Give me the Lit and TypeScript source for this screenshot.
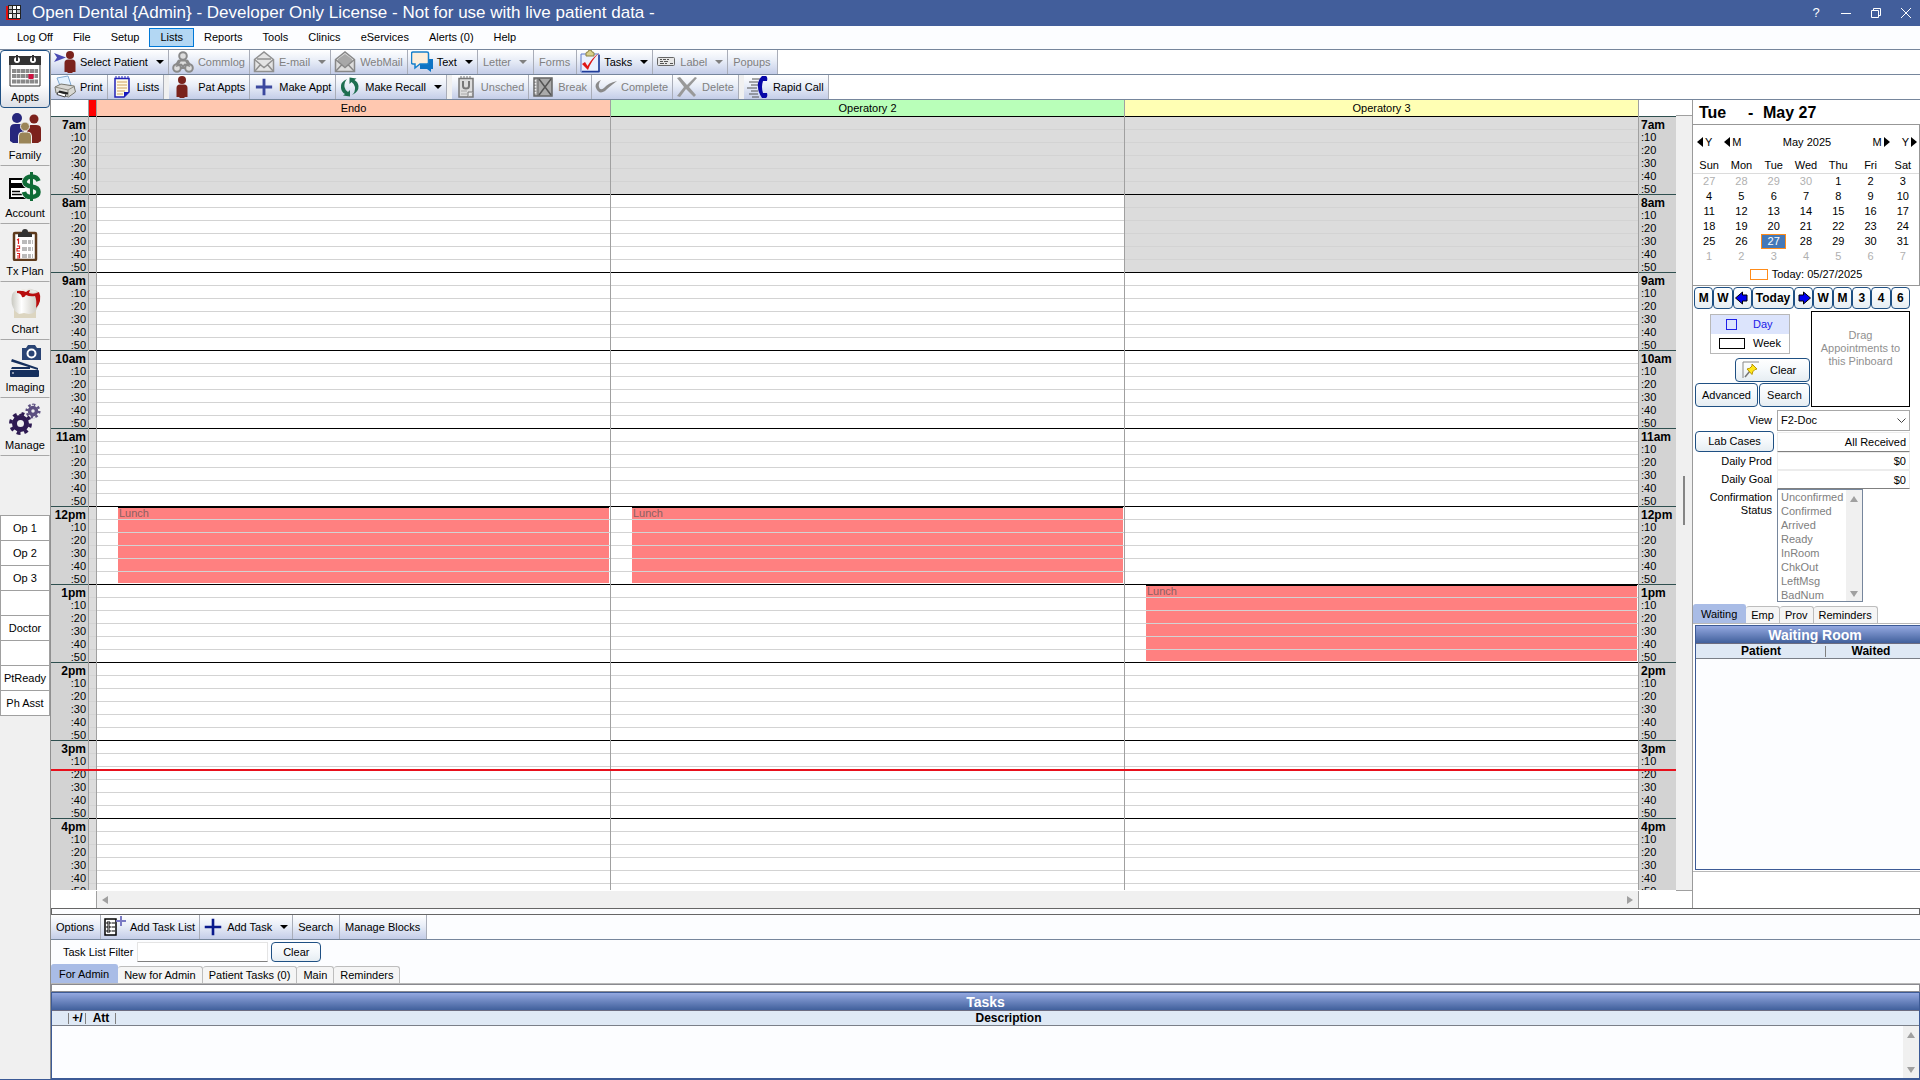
import { LitElement, html, css, svg, nothing } from "lit";
import type { TemplateResult } from "lit";
import { customElement, state } from "lit/decorators.js";
import { classMap } from "lit/directives/class-map.js";

/* ---------- icons ---------- */

const person = (cx: number, color: string) => svg`
  <circle cx=${cx} cy="5" r="4" fill=${color}></circle>
  <path d="M${cx - 5.5} 22V13q0-3.500 3.500-3.500h4q3.500 0 3.500 3.500V22h-2.500l-1 1h-4l-1-1z" fill=${color}></path>`;

const plus = (color: string, a: number, b: number) => svg`
  <path d="M${a} 11.500H${b}M11.500 ${a}V${b}" stroke=${color} stroke-width="3"></path>`;

const icons: Record<string, TemplateResult> = {
  logo: html`<svg class="i16" viewBox="0 0 16 16">
    <path d="M0 1h14v14H0z" fill="#e01010"></path>
    <path d="M2 0h13v14H2z" fill="#222"></path>
    <path d="M3 1h3v3H3zM3 5h3v3H3zM7 9h3v4H7zM11 5h3v3h-3z" fill="#bbb"></path>
    <path d="M7 1h3v3H7zM11 1h3v3h-3zM7 5h3v3H7zM11 9h3v4h-3zM3 9h3v4H3z" fill="#fff"></path></svg>`,
  selectPatient: html`<svg class="i22" viewBox="0 0 22 24">
    <path d="M0 3l12 4.500L0 12l3-4.500z" fill="#4b4bb4"></path>${person(16, "#7a221c")}</svg>`,
  commlog: html`<svg class="i22" viewBox="0 0 22 24">
    <g fill="#ddd" stroke="#8a8a8a" stroke-width="2"><circle cx="11" cy="6" r="3.800"></circle>
    <path d="M7 10l-3 5M15 10l3 5M8 18h6" fill="none"></path>
    <circle cx="5" cy="18" r="3.800"></circle><circle cx="17" cy="18" r="3.800"></circle>
    <path d="M8 10.500h6l2.500 5-3.500-1-2 2-2-2-3.500 1z"></path></g></svg>`,
  email: html`<svg class="i22" viewBox="0 0 22 24">
    <path d="M1.500 9.500L11 2l9.500 7.500V21.500h-19z" fill="#e4e4e4" stroke="#909090" stroke-width="1.500"></path>
    <path d="M1.500 9.500l6 5-6 7M20.500 9.500l-6 5 6 7M7 14.500l4 3 4-3M4 9h14" fill="none" stroke="#909090" stroke-width="1.500"></path></svg>`,
  webmail: html`<svg class="i22" viewBox="0 0 22 24">
    <path d="M1.500 9.500L11 2l9.500 7.500V21.500h-19z" fill="#ddd" stroke="#888" stroke-width="1.500"></path>
    <path d="M4 9l7-5 7 5v3l-7 5-7-5z" fill="#a8a8a8"></path>
    <path d="M1.500 9.500l9.500 8 9.500-8M1.500 21.500l6-6.500M20.500 21.500l-6-6.500" fill="none" stroke="#888" stroke-width="1.500"></path></svg>`,
  text: html`<svg class="i22" viewBox="0 0 22 24">
    <path d="M9 9h13v10h-2v3l-4-3H9z" fill="#0f74c4"></path>
    <path d="M2 2h14q1.500 0 1.500 1.500v9q0 1.500-1.500 1.500H9l-5 4v-4H2q-1.500 0-1.500-1.500v-9Q.5 2 2 2z" fill="#fdeedb" stroke="#1780cc" stroke-width="1.500"></path></svg>`,
  tasks: html`<svg class="i20" viewBox="0 0 20 24">
    <path d="M1 4h18v18H1z" fill="#eaf0ff" stroke="#5a78c8"></path><path d="M2 21.500h17V5" fill="none" stroke="#203c98" stroke-width="1.500"></path>
    <path d="M6 3q0-1 2-1 0-2 2-2t2 2q2 0 2 1v3H6z" fill="#d8cf8a" stroke="#8a8040"></path>
    <path d="M2 14l3-2 2.500 4Q12 8 19 3 11 11 8 20z" fill="#e01818"></path></svg>`,
  label: html`<svg class="i20" viewBox="0 0 20 24">
    <rect x="1.500" y="7.500" width="17" height="8" rx="1" fill="#e6e6e6" stroke="#666"></rect>
    <path d="M4 9.500h2m1 0h3m1 0h2M4 11.500h3m1 0h4M4 13.500h4m1 0h2m3 0h3" stroke="#555"></path></svg>`,
  print: html`<svg class="i22" viewBox="0 0 22 24">
    <path d="M3 3l11-2 3 9-10 3z" fill="#e4f2ff" stroke="#7fa8d0"></path>
    <path d="M1 12l6-3 13 2 1.500 6-7 5L2 18z" fill="#d8d8d4" stroke="#77776f"></path>
    <path d="M1 12l13 3 7-4M14 15v6" stroke="#8c8c84" fill="none"></path>
    <path d="M4 17l8 2-1 3-8-2.500z" fill="#fff" stroke="#444"></path><path d="M5 16.500l9 2" stroke="#222" stroke-width="2"></path></svg>`,
  lists: html`<svg class="i16w" viewBox="0 0 16 24">
    <path d="M1 3.500h14V17l-5 5H1z" fill="#fffbe8" stroke="#2222b8" stroke-width="1.500"></path>
    <path d="M2 3V1m3 2V1m3 2V1m3 2V1m3 2V1" stroke="#2222b8"></path>
    <path d="M3 7h10M3 10h10M3 13h10M3 16h8M3 19h6" stroke="#dfc08a" stroke-width="1.500"></path>
    <path d="M10 22v-5h5z" fill="#1818c0"></path></svg>`,
  patAppts: html`<svg class="i22" viewBox="0 0 22 24">${person(10, "#7a221c")}</svg>`,
  plus: html`<svg class="i22" viewBox="0 0 23 23">${plus("#3b489e", 3, 20)}</svg>`,
  plusDark: html`<svg class="i20" viewBox="0 0 23 23">${plus("#0a1a8c", 2, 21)}</svg>`,
  recall: html`<svg class="i22" viewBox="0 0 22 24">
    <path d="M8 4Q1 7 2 13q.5 4 4 6l-2 1.500 7 1V15l-2 2q-3-2-3.500-5Q5 7 8 4z" fill="#1e6e50"></path>
    <path d="M13 20q7-3 6.500-9-.5-4-4-6l2-1.500-7-1V9l2-2q3 2 3.500 5 .5 5-3 8z" fill="#1e6e50"></path></svg>`,
  unsched: html`<svg class="i16w" viewBox="0 0 16 24">
    <path d="M1 3.500h14V22H1z" fill="#ddd" stroke="#777" stroke-width="1.500"></path><path d="M3 3V1m3 2V1m3 2V1m3 2V1" stroke="#777"></path>
    <path d="M5 6v5q0 2.500 3 2.500T11 11V6" fill="none" stroke="#777" stroke-width="2"></path><path d="M3 16h6M3 19h6" stroke="#aaa"></path>
    <path d="M10 22v-5h5" fill="#eee" stroke="#777"></path></svg>`,
  break: html`<svg class="i22" viewBox="0 0 22 24">
    <path d="M2 3h18v18H2z" fill="#aaa" stroke="#666" stroke-width="1.500"></path><path d="M6 3v18" stroke="#666"></path>
    <path d="M3.500 5v15" stroke="#eee" stroke-width="1.500" stroke-dasharray="1.500 1.500"></path>
    <path d="M7 4l12 16M19 4L7 20" stroke="#555" stroke-width="1.500"></path></svg>`,
  complete: html`<svg class="i22" viewBox="0 0 22 24">
    <path d="M6 5Q-1 8 1 13q3 7 9 3 4-4 12-10-9 2-13 7-4 3-5-1Q3 8 6 5z" fill="#8a8a8a"></path></svg>`,
  delete: html`<svg class="i22" viewBox="0 0 22 24">
    <path d="M1 3l3-1 7 8 8-8 2 1-8 9 7 8-2 2-8-8-6 8-3-1 7-9z" fill="#999"></path></svg>`,
  rapid: html`<svg class="i22" viewBox="0 0 22 24">
    <path d="M5 4h8M2 7h9M4 10h7M0 13h10M4 16h7M2 19h9M5 22h7" stroke="#555"></path>
    <path d="M19 1h-4q-5 5-4 11 0 5 4 11h4q2-1 1-5h-4q-2-6 0-12h4q1-4-1-5z" fill="#0808a8"></path></svg>`,
  addList: html`<svg class="i22" viewBox="0 0 22 24">
    <path d="M1 4h11v16H1z" fill="#fff" stroke="#000" stroke-width="1.500"></path>
    <path d="M3 7h3v2H3zM3 11h3v2H3zM3 15h3v2H3z" stroke="#000" fill="none"></path><path d="M7.500 8H11M7.500 12H11M7.500 16H11" stroke="#000"></path>
    <path d="M12 6h10M17 1v10" stroke="#7a7ac4" stroke-width="2"></path></svg>`,
  pin: html`<svg class="i18" viewBox="0 0 18 18">
    <path d="M1 17V1h16" fill="none" stroke="#888"></path><path d="M3 16l5-6" stroke="#777" stroke-width="1.500"></path>
    <path d="M5 8q3 0 5-3V3l5 5-2 .5q-3 2-3 5z" fill="#ffe61a" stroke="#b89400"></path></svg>`,
  arrowLeft: html`<svg class="i14" viewBox="0 0 14 14"><path d="M0.500 7l7-6v3h4.500v6H7.500v3z" fill="#0000f0" stroke="#000"></path></svg>`,
  arrowRight: html`<svg class="i14" viewBox="0 0 14 14"><path d="M13.500 7l-7-6v3H2v6h4.500v3z" fill="#0000f0" stroke="#000"></path></svg>`,
  appts: html`<svg class="i32" viewBox="0 0 32 32">
    <path d="M1 2h30v29H1z" fill="#fff" stroke="#333"></path><path d="M0 1h32v9H0z" fill="#333"></path>
    <circle cx="8" cy="5" r="3" fill="#fff"></circle><circle cx="24" cy="5" r="3" fill="#fff"></circle>
    <path d="M8 0v6M24 0v6" stroke="#333" stroke-width="2"></path>
    <path d="M3 16h26M3 21h26M3 26.500h26" stroke="#8a8a8a" stroke-width="4" stroke-dasharray="4 .500"></path>
    <rect x="19.500" y="19" width="5" height="5" fill="#d01040"></rect></svg>`,
  family: html`<svg class="i32" viewBox="0 0 32 32">
    <circle cx="8" cy="5" r="5" fill="#26267c"></circle><path d="M1 28V16q0-5 5-5h4q5 0 5 5v12l-3 2H4z" fill="#26267c"></path>
    <circle cx="25" cy="6" r="4.500" fill="#7c221c"></circle><path d="M18 28V16q0-4 4-4h5q5 0 5 4v12l-3 2h-8z" fill="#7c221c"></path>
    <circle cx="16" cy="13.500" r="4.500" fill="#9a8558" stroke="#f0f0f0"></circle><path d="M9.500 31v-8q0-4 4-4h5q4 0 4 4v8z" fill="#9a8558" stroke="#f0f0f0"></path></svg>`,
  account: html`<svg class="i32" viewBox="0 0 32 32">
    <path d="M1 8h20v19H1z" fill="#fff" stroke="#000" stroke-width="2"></path><path d="M1 12h18v5H1z"></path>
    <path d="M3 20.500h8M3 23.500h10" stroke="#000" stroke-width="1.500"></path>
    <path d="M29.500 10Q28 5.500 22.500 5.500T15.500 10.500q0 4 7 5t7 5.500-7 5q-6.500 0-7.500-5M22.500 1v29" fill="none" stroke="#f0f0f0" stroke-width="6"></path>
    <path d="M29.500 10Q28 5.500 22.500 5.500T15.500 10.500q0 4 7 5t7 5.500-7 5q-6.500 0-7.500-5" fill="none" stroke="#0f6b36" stroke-width="4.500"></path>
    <path d="M22.500 1v29" stroke="#0f6b36" stroke-width="3"></path></svg>`,
  txplan: html`<svg class="i32" viewBox="0 0 32 32">
    <rect x="5" y="4" width="22" height="27" rx="1" fill="#fff" stroke="#5e3a1c" stroke-width="2.500"></rect>
    <path d="M9 8V5l4-2q0-3 3-3t3 3l4 2v3z" fill="#333"></path>
    <path d="M13 12h11M13 14h11M13 19h11M13 21h11M13 26h11M13 28h11" stroke="#777" stroke-dasharray="5 1 3 1"></path>
    <path d="M8 11l1.500-1v5M8 17h2.500v2.500H8V22h3M8 24.500h2.500V29H8m0-2h2.500" fill="none" stroke="#e02020" stroke-width="1.200"></path></svg>`,
  chart: html`<svg class="i32" viewBox="0 0 32 32">
    <defs><linearGradient id="tooth"><stop offset="0" stop-color="#c8c8c0"></stop><stop offset=".35" stop-color="#fff"></stop><stop offset="1" stop-color="#c4c2b8"></stop></linearGradient></defs>
    <path d="M5 22h22v9H5z" fill="#dcd5c0"></path>
    <path d="M3 8q1-4 6-5 3-2 7 0 4-3 9 0 6 1 6 7-1 9-5 15-3 2-6 2l-5-1-5 1-4-3Q1 17 3 8z" fill="url(#tooth)"></path>
    <path d="M8 4q5-1 9 1 2-2 4-2l-1 3q5 2 10-1 2 4 1 9-1 4-4 7 1-8-1-12-5 1-9-1-2 3-4 2-1-4-5-4z" fill="#b80d0d"></path>
    <path d="M11 3q3-2 6 0-3 2-6 0zM21 4q4-2 7 1-4 2-7-1z" fill="#eceae4"></path></svg>`,
  imaging: html`<svg class="i32" viewBox="0 0 32 32">
    <path d="M13 3h4l2-3h7l2 3h4v12H13z" fill="#2a4474"></path><circle cx="22.500" cy="8.500" r="4" fill="none" stroke="#fff" stroke-width="2"></circle>
    <path d="M3 14l26 9v2L2 16.500zM3 22h18v2H2z" fill="#16305e"></path><rect x="1" y="25" width="29" height="7" rx="1" fill="#16305e"></rect>
    <path d="M3 28h2" stroke="#fff"></path></svg>`,
  manage: html`<svg class="i32" viewBox="0 0 32 32">
    <circle cx="11.500" cy="20.500" r="6" fill="none" stroke="#2e1a52" stroke-width="5"></circle>
    <circle cx="11.500" cy="20.500" r="9.700" fill="none" stroke="#2e1a52" stroke-width="3.500" pathLength="16" stroke-dasharray="1 1"></circle>
    <circle cx="24" cy="8" r="3.500" fill="none" stroke="#5c4f80" stroke-width="3.500"></circle>
    <circle cx="24" cy="8" r="6.300" fill="none" stroke="#5c4f80" stroke-width="2.500" pathLength="16" stroke-dasharray="1 1"></circle></svg>`,
};

/* ---------- data ---------- */

interface ToolItem { label: string; icon?: string; menu?: boolean; off?: boolean; gap?: boolean; }

const MENU = ["Log Off", "File", "Setup", "Lists", "Reports", "Tools", "Clinics", "eServices", "Alerts (0)", "Help"];

const MAIN_TOOLS: ToolItem[] = [
  { label: "Select Patient", icon: "selectPatient", menu: true },
  { label: "Commlog", icon: "commlog", off: true },
  { label: "E-mail", icon: "email", menu: true, off: true },
  { label: "WebMail", icon: "webmail", off: true },
  { label: "Text", icon: "text", menu: true },
  { label: "Letter", menu: true, off: true },
  { label: "Forms", off: true },
  { label: "Tasks", icon: "tasks", menu: true },
  { label: "Label", icon: "label", menu: true, off: true },
  { label: "Popups", off: true },
];

const APPT_TOOLS: ToolItem[] = [
  { label: "Print", icon: "print" },
  { label: "Lists", icon: "lists" },
  { label: "Pat Appts", icon: "patAppts", gap: true },
  { label: "Make Appt", icon: "plus" },
  { label: "Make Recall", icon: "recall", menu: true },
  { label: "Unsched", icon: "unsched", off: true, gap: true },
  { label: "Break", icon: "break", off: true },
  { label: "Complete", icon: "complete", off: true },
  { label: "Delete", icon: "delete", off: true },
  { label: "Rapid Call", icon: "rapid", gap: true },
];

const TASK_TOOLS: ToolItem[] = [
  { label: "Options" },
  { label: "Add Task List", icon: "addList" },
  { label: "Add Task", icon: "plusDark", menu: true },
  { label: "Search" },
  { label: "Manage Blocks" },
];

const MODULES = [
  ["Appts", "appts"], ["Family", "family"], ["Account", "account"], ["Tx Plan", "txplan"],
  ["Chart", "chart"], ["Imaging", "imaging"], ["Manage", "manage"],
];
const ROOMS = ["Op 1", "Op 2", "Op 3", "", "Doctor", "", "PtReady", "Ph Asst"];

const HOURS = ["7am", "8am", "9am", "10am", "11am", "12pm", "1pm", "2pm", "3pm", "4pm"];
const MINUTES = [":10", ":20", ":30", ":40", ":50"];
const OPERATORIES = [
  { name: "Endo", tone: "peach", closed: ["7am"], lunch: "12pm" },
  { name: "Operatory 2", tone: "green", closed: ["7am"], lunch: "12pm" },
  { name: "Operatory 3", tone: "yellow", closed: ["7am", "8am"], lunch: "1pm" },
];

const WEEKDAYS = ["Sun", "Mon", "Tue", "Wed", "Thu", "Fri", "Sat"];
// Six weeks starting Sunday, April 27
const WEEKS = Array.from({ length: 6 }, (_, w) =>
  Array.from({ length: 7 }, (_, d) => {
    const n = w * 7 + d - 3;
    if (n < 1) return { day: 30 + n, other: true };
    return n > 31 ? { day: n - 31, other: true } : { day: n, other: false };
  }));

const STATUSES = ["Unconfirmed", "Confirmed", "Arrived", "Ready", "InRoom", "ChkOut", "LeftMsg", "BadNum"];

/* ---------- shared styles ---------- */

const base = css`
  :host { display: block; box-sizing: border-box; }
  *, *::before, *::after { box-sizing: border-box; }
  button, input, select { font: inherit; color: inherit; margin: 0; padding: 0; border: 0; background: none; border-radius: 0; outline: 0; }
  button { cursor: default; white-space: nowrap; }
  svg { display: block; flex: none; }
  .i14 { width: 14px; height: 14px; }
  .i16 { width: 16px; height: 16px; }
  .i18 { width: 18px; height: 18px; }
  .i16w { width: 16px; height: 24px; margin: 0 3px; }
  .i20 { width: 20px; height: 24px; }
  .i22 { width: 22px; height: 24px; }
  .i32 { width: 32px; height: 32px; }
  .push { border: 1px solid #1f5083; border-radius: 4px; background: linear-gradient(#fff, #f4f8fb 50%, #e6edf2); text-align: center; }
  .tabs { display: flex; align-items: flex-end; height: 20px; border-bottom: 1px solid #b8b8b8; }
  .tab { height: 17px; padding: 0 6px; border: 1px solid #bdbdbd; border-left-width: 0; border-bottom: 0; border-radius: 3px 3px 0 0; background: #f5f5f5; }
  .tab.on { height: 19px; padding: 0 8px; background: #a9bce6; border-color: #a9bce6; }
  .up, .down, .left, .right, .caret { width: 0; height: 0; border: 4px solid transparent; flex: none; }
  .up { border-top: 0; border-bottom: 6px solid #a0a0a0; }
  .down { border-bottom: 0; border-top: 6px solid #a0a0a0; }
  .left { border-left: 0; border-right: 6px solid #a0a0a0; }
  .right { border-right: 0; border-left: 6px solid #a0a0a0; }
  .caret { border-bottom: 0; border-top: 4px solid currentColor; margin-left: 4px; }
  .band { height: 18px; text-align: center; color: #fff; font: bold 14px/18px "Liberation Sans", sans-serif; background: linear-gradient(#94a8e0, #41609c); border-bottom: 1px solid #6c6c80; }
  .cols { width: 100%; border-collapse: collapse; table-layout: fixed; background: #dfe9f5; border-bottom: 1px solid #7a7f88; }
  .cols th { height: 14px; padding: 0; font: bold 12px/14px "Liberation Sans", sans-serif; }
  .cols th.sep { background: linear-gradient(#808080, #808080) right center / 1px 11px no-repeat; }
`;

/* ---------- toolbar ---------- */

@customElement("tool-strip")
class ToolStrip extends LitElement {
  static properties = { items: { attribute: false } };
  declare items: ToolItem[];
  static styles = [base, css`
    .strip { display: flex; height: 25px; border-bottom: 1px solid #76869c; }
    .tool { display: flex; align-items: center; gap: 4px; height: 24px; padding: 0 4px 0 3px; border-right: 1px solid #a9adb8; background: linear-gradient(#fff, #e8edf7 45%, #c4cde8); }
    .plain { padding: 0 6px 0 5px; }
    .gap { border-left: 5px solid #f0f0f0; }
    .off { color: #808080; }
  `];
  render() {
    return html`<div class="strip" role="toolbar">${this.items.map((t) => html`
      <button class=${classMap({ tool: true, plain: !t.icon, off: !!t.off, gap: !!t.gap })} ?disabled=${t.off}>
        ${t.icon ? icons[t.icon] : nothing}<span>${t.label}</span>
        ${t.menu ? html`<span class="caret"></span>` : nothing}
      </button>`)}</div>`;
  }
}

/* ---------- schedule ---------- */

@customElement("appt-schedule")
class ApptSchedule extends LitElement {
  static styles = [base, css`
    :host { display: flex; flex: 1; min-width: 0; min-height: 0; }
    .left-part { display: flex; flex-direction: column; flex: 1; min-width: 0; }
    .grid { position: relative; display: grid; flex: 1; min-height: 0; overflow: hidden; grid-template: 16px auto / 37px 9px repeat(3, 1fr) 37px; }
    .head { text-align: center; line-height: 16px; border-right: 1px solid #a0a0a0; }
    .peach { background: #ffc8b0; }
    .green { background: #b9ffb9; }
    .yellow { background: #ffffb4; }
    .flag { background: #f00; border: solid #a0a0a0; border-width: 0 1px; }
    .times { background: #d3d3d3; }
    .times.l { text-align: right; }
    .block { height: 78px; padding: 1px 2px 0; border-top: 1px solid #2f4f4f; }
    .slot { height: 13px; line-height: 13px; }
    .slot.h { padding-top: 1px; font: bold 12px/13px "Liberation Sans", sans-serif; }
    .strip { background: #dcdcdc; border: solid #a0a0a0; border-width: 0 1px; }
    .op { border-right: 1px solid #a0a0a0; }
    .hour { height: 78px; border-top: 1px solid #000; }
    .lines { background-image: repeating-linear-gradient(transparent 0 12px, #d3d3d3 12px 13px); }
    .closed { background-color: #dcdcdc; }
    .event { height: 76px; margin: 0 1px 0 21px; background-color: #ff8080; color: #8a6060; box-shadow: inset 0 1px #000; padding: 0 1px; line-height: 13px; }
    .now { position: absolute; left: 0; right: 0; top: 669px; height: 2px; background: #e8101c; }
    .hbar { display: flex; justify-content: space-between; align-items: center; height: 17px; margin: 1px 37px 0 45px; padding: 0 5px; background: #f0f0f0; border: solid #a0a0a0; border-width: 0 1px; }
    .vbar { width: 16px; margin: 15px 0 17px; background: #f0f0f0; border: solid #a0a0a0; border-width: 1px 0; display: flex; justify-content: center; }
    .thumb { width: 2px; height: 49px; margin-top: 360px; background: #858585; }
  `];
  private times(side: string) {
    return html`<div class="times ${side}">${HOURS.map((h) => html`<div class="block">
      <div class="slot h">${h}</div>${MINUTES.map((m) => html`<div class="slot">${m}</div>`)}</div>`)}</div>`;
  }
  render() {
    return html`
      <div class="left-part">
        <div class="grid">
          <div></div><div class="flag"></div>
          ${OPERATORIES.map((o) => html`<div class="head ${o.tone}">${o.name}</div>`)}
          <div></div>
          ${this.times("l")}
          <div class="strip">${HOURS.map(() => html`<div class="hour lines"></div>`)}</div>
          ${OPERATORIES.map((o) => html`<div class="op">${HOURS.map((h) => html`
            <div class=${classMap({ hour: true, lines: true, closed: o.closed.includes(h) })}>
              ${o.lunch === h ? html`<div class="event lines">Lunch</div>` : nothing}
            </div>`)}</div>`)}
          ${this.times("r")}
          <div class="now"></div>
        </div>
        <div class="hbar"><span class="left"></span><span class="right"></span></div>
      </div>
      <div class="vbar"><span class="thumb"></span></div>`;
  }
}

/* ---------- side panel ---------- */

@customElement("side-panel")
class SidePanel extends LitElement {
  @state() private tab = "Waiting";
  static styles = [base, css`
    :host { width: 228px; flex: none; border-left: 1px solid #9a9a9a; background: #fff; }
    .date { display: flex; height: 24px; padding: 3px 6px 0 6px; font: bold 16px/20px "Liberation Sans", sans-serif; }
    .date .wd { width: 49px; }
    .date .dash { width: 15px; }
    .cal { height: 162px; border: 1px solid #979797; border-left: 0; }
    .nav { display: flex; justify-content: space-between; align-items: center; height: 33px; padding: 0 2px 0 4px; line-height: 14px; }
    .nav .pair { display: flex; gap: 12px; }
    .nav button { display: flex; align-items: center; gap: 2px; }
    .tri-l, .tri-r { width: 0; height: 0; border: 5px solid transparent; border-right: 6px solid #000; border-left: 0; }
    .tri-r { border-right: 0; border-left: 6px solid #000; }
    .days { width: 100%; border-collapse: collapse; table-layout: fixed; text-align: center; line-height: 15px; }
    .days th { font-weight: normal; padding: 0; height: 14px; border-bottom: 1px solid #dcdcdc; }
    .days td { padding: 0; height: 15px; }
    .other { color: #b0b0b0; }
    .today { display: block; width: 25px; margin: 0 auto; height: 15px; line-height: 13px; background: #4478b8; color: #fff; border: 1px solid #ff8c1a; }
    .foot { display: flex; align-items: center; justify-content: center; gap: 4px; height: 20px; }
    .swatch { width: 18px; height: 11px; border: 1px solid #ff8c1a; }
    .jump { display: flex; padding: 1px 10px 0 1px; height: 24px; }
    .jump .push { flex: 19 1 0; min-width: 0; height: 22px; font: bold 12px/20px "Liberation Sans", sans-serif; display: flex; justify-content: center; align-items: center; }
    .jump .wide { flex-grow: 44; }
    .tools { display: flex; padding: 1px 10px 0 2px; }
    .controls { flex: 1; display: flex; flex-direction: column; }
    .range { width: 80px; margin: 3px 0 0 15px; border: 1px solid #b8b8b8; }
    .range button { display: flex; align-items: center; width: 100%; height: 19px; }
    .range .pic { width: 42px; display: flex; justify-content: center; }
    .range .on { background: #dce4fc; color: #2020e8; }
    .sq { width: 11px; height: 11px; border: 1px solid #2020e8; margin-left: -2px; }
    .rect { width: 26px; height: 11px; border: 1px solid #000; }
    .clear { display: flex; align-items: center; gap: 10px; width: 75px; height: 24px; margin: 4px 1px 0 40px; padding-left: 6px; }
    .row { display: flex; gap: 1px; margin-top: 1px; }
    .row .push { height: 24px; width: 63px; }
    .row .push + .push { width: 51px; }
    .pinboard { width: 99px; height: 96px; border: 1px solid #000; padding-top: 17px; text-align: center; line-height: 13px; color: #909090; }
    .form { display: grid; grid-template-columns: 79px 133px; column-gap: 3px; padding: 3px 10px 0 2px; align-items: center; }
    .form label { text-align: right; padding-right: 2px; }
    .form select.view { height: 21px; width: 100%; border: 1px solid #a8a8a8; appearance: none; padding: 0 3px; }
    .pick { position: relative; height: 21px; }
    .pick svg { position: absolute; right: 4px; top: 8px; }
    .lab { height: 21px; }
    .form input { width: 100%; text-align: right; padding-right: 3px; border: 1px solid #ececec; height: 18px; }
    .form input.line { height: 20px; border-bottom-color: #808080; }
    .form input.line2 { border-bottom-color: #808080; height: 19px; }
    .form .top { align-self: start; padding-top: 2px; line-height: 13px; }
    .listbox { display: flex; width: 86px; height: 113px; border: 1px solid #76869c; }
    .listbox select { flex: 1; min-width: 0; overflow: hidden; color: #808080; opacity: 1; height: 111px; }
    .listbox option { padding: 1px 3px 0; height: 14px; min-height: 14px; line-height: 13px; color: #808080; }
    .track { width: 16px; background: #f0f0f0; display: flex; flex-direction: column; justify-content: space-between; align-items: center; padding: 6px 0 4px; }
    .tabs { margin-top: 2px; }
    .tabs .tab { padding: 0 5px; }
    .tabs .tab.on { padding: 0 8px; }
    .waiting { border: solid #b8b8b8; border-width: 0 0 1px; padding: 1px 0 1px 2px; }
    .box { border: 1px solid #3c5a96; border-right: 0; background: #fcfdff; height: 245px; }
    .box .band { padding-left: 14px; }
    .box .c1 { width: 130px; }
    .box .c2 { padding-right: 4px; }
  `];
  render() {
    const jump = (t: string) => html`<button class="push">${t}</button>`;
    return html`
      <div class="date"><span class="wd">Tue</span><span class="dash">-</span><span>May 27</span></div>
      <div class="cal">
        <div class="nav">
          <span class="pair"><button><span class="tri-l"></span>Y</button><button><span class="tri-l"></span>M</button></span>
          <span>May 2025</span>
          <span class="pair"><button>M<span class="tri-r"></span></button><button>Y<span class="tri-r"></span></button></span>
        </div>
        <table class="days">
          <thead><tr>${WEEKDAYS.map((d) => html`<th>${d}</th>`)}</tr></thead>
          <tbody>${WEEKS.map((w) => html`<tr>${w.map((c) => html`
            <td class=${c.other ? "other" : ""}>${c.day === 27 && !c.other ? html`<span class="today">27</span>` : c.day}</td>`)}</tr>`)}</tbody>
        </table>
        <div class="foot"><span class="swatch"></span><span>Today: 05/27/2025</span></div>
      </div>
      <div class="jump">
        ${jump("M")}${jump("W")}<button class="push" aria-label="Back one day">${icons.arrowLeft}</button>
        <button class="push wide">Today</button>
        <button class="push" aria-label="Forward one day">${icons.arrowRight}</button>
        ${["W", "M", "3", "4", "6"].map(jump)}
      </div>
      <div class="tools">
        <div class="controls">
          <div class="range">
            <button class="on"><span class="pic"><span class="sq"></span></span>Day</button>
            <button><span class="pic"><span class="rect"></span></span>Week</button>
          </div>
          <button class="push clear">${icons.pin}<span>Clear</span></button>
          <div class="row"><button class="push">Advanced</button><button class="push">Search</button></div>
        </div>
        <div class="pinboard">Drag<br>Appointments to<br>this Pinboard</div>
      </div>
      <div class="form">
        <label for="view">View</label>
        <div class="pick"><select id="view" class="view"><option>F2-Doc</option></select>
          <svg width="9" height="6" viewBox="0 0 9 6"><path d="M.5 .5l4 4 4-4" fill="none" stroke="#444"></path></svg></div>
        <button class="push lab" id="lab">Lab Cases</button>
        <input class="line" aria-labelledby="lab" readonly .value=${"All Received"}>
        <label for="prod">Daily Prod</label><input id="prod" readonly .value=${"$0"}>
        <label for="goal">Daily Goal</label><input id="goal" class="line2" readonly .value=${"$0"}>
        <label class="top" for="status">Confirmation<br>Status</label>
        <div class="listbox">
          <select id="status" size="8" disabled>${STATUSES.map((s) => html`<option>${s}</option>`)}</select>
          <span class="track"><span class="up"></span><span class="down"></span></span>
        </div>
      </div>
      <div class="tabs">${["Waiting", "Emp", "Prov", "Reminders"].map((t) => html`
        <button class=${classMap({ tab: true, on: t === this.tab })} @click=${() => (this.tab = t)}>${t}</button>`)}</div>
      <div class="waiting"><div class="box">
        <div class="band">Waiting Room</div>
        <table class="cols"><thead><tr><th class="sep c1">Patient</th><th class="c2">Waited</th></tr></thead></table>
      </div></div>`;
  }
}

/* ---------- tasks ---------- */

@customElement("task-panel")
class TaskPanel extends LitElement {
  @state() private tab = "For Admin";
  static styles = [base, css`
    :host { display: flex; flex-direction: column; height: 171px; flex: none; background: #fcfdff; }
    .splitter { height: 7px; border: 1px solid #666; flex: none; }
    .splitter.two { height: 8px; border-color: #8a8a90; background: #fff; }
    .filter { display: flex; align-items: center; height: 24px; padding-left: 12px; }
    .filter input { width: 131px; height: 20px; margin: 0 3px 0 4px; border: 1px solid #e4e4e4; border-bottom-color: #808080; background: #fff; padding: 0 3px; }
    .filter .push { width: 50px; height: 20px; }
    .grid { flex: 1; display: flex; flex-direction: column; border: 1px solid #3c5a96; min-height: 0; }
    .c0 { width: 17px; }
    .c1 { width: 17px; }
    .c2 { width: 30px; }
    .cols .c3 { padding-right: 18px; }
    .rows { flex: 1; display: flex; justify-content: flex-end; }
    .track { width: 16px; background: #f0f0f0; display: flex; flex-direction: column; justify-content: space-between; align-items: center; padding: 6px 0 5px; }
  `];
  render() {
    return html`
      <div class="splitter"></div>
      <tool-strip .items=${TASK_TOOLS}></tool-strip>
      <div class="filter"><label for="filter">Task List Filter</label><input id="filter"><button class="push">Clear</button></div>
      <div class="tabs">${["For Admin", "New for Admin", "Patient Tasks (0)", "Main", "Reminders"].map((t) => html`
        <button class=${classMap({ tab: true, on: t === this.tab })} @click=${() => (this.tab = t)}>${t}</button>`)}</div>
      <div class="splitter two"></div>
      <div class="grid">
        <div class="band">Tasks</div>
        <table class="cols"><thead><tr><th class="sep c0"></th><th class="sep c1">+/</th><th class="sep c2">Att</th><th class="c3">Description</th></tr></thead></table>
        <div class="rows"><span class="track"><span class="up"></span><span class="down"></span></span></div>
      </div>`;
  }
}

/* ---------- shell ---------- */

@customElement("app-root")
class AppRoot extends LitElement {
  static styles = [base, css`
    .app { display: flex; flex-direction: column; height: 100vh; min-height: 600px; overflow: hidden; border-bottom: 1px solid #3c5a96; background: #fff; color: #000; font: 11px/15px "Liberation Sans", Arial, sans-serif; }
    .title { display: flex; align-items: center; gap: 10px; height: 26px; flex: none; padding: 0 9px 0 6px; background: #425e9b; color: #fff; font: 17px/26px "Liberation Sans", sans-serif; }
    .title .name { flex: 1; }
    .win { display: flex; align-items: center; gap: 20px; }
    .win button { width: 10px; display: flex; justify-content: center; font-size: 13px; }
    .menu { display: flex; height: 24px; flex: none; padding: 2px 0 0 7px; background: #fcfdff; border-bottom: 1px solid #76869c; }
    .menu button { height: 19px; padding: 0 9px; border: 1px solid transparent; }
    .menu .on { padding: 0 10px; background: #b3d7f3; border-color: #0078d7; }
    .body { display: flex; flex: 1; min-height: 0; }
    .rail { width: 51px; flex: none; background: #f0f0f0; border-right: 1px solid #909090; line-height: 14px; }
    .module { display: flex; flex-direction: column; align-items: center; gap: 3px; width: 50px; height: 58px; padding: 4px 0 0; border: 1px solid transparent; border-bottom-color: #a8a8a8; }
    .module.on { background: linear-gradient(#fff 60%, #dcdfe6); border: 1px solid #1f5083; border-radius: 4px; }
    .rooms { margin: 59px 0 0; padding: 0; list-style: none; border-bottom: 1px solid #a0a0a0; line-height: 24px; text-align: center; }
    .rooms li { height: 25px; border: 1px solid #a0a0a0; border-bottom: 0; background: #fff; }
    .main { display: flex; flex-direction: column; flex: 1; min-width: 0; }
    .work { display: flex; flex: 1; min-height: 0; }
  `];
  render() {
    return html`<div class="app">
      <header class="title">${icons.logo}<span class="name">Open Dental {Admin} - Developer Only License - Not for use with live patient data -</span>
        <span class="win"><button>?</button>
          <button aria-label="Minimize"><svg width="10" height="10"><path d="M0 5.500h10" stroke="#fff"></path></svg></button>
          <button aria-label="Restore"><svg width="10" height="10"><path d="M.5 2.500h7v7h-7zM2.500 2.500v-2h7v7h-2" fill="none" stroke="#fff"></path></svg></button>
          <button aria-label="Close"><svg width="10" height="10"><path d="M0 0l10 10M10 0L0 10" stroke="#fff"></path></svg></button></span>
      </header>
      <nav class="menu">${MENU.map((m) => html`<button class=${m === "Lists" ? "on" : ""}>${m}</button>`)}</nav>
      <div class="body">
        <aside class="rail">
          ${MODULES.map(([label, icon]) => html`<button class=${classMap({ module: true, on: label === "Appts" })}>${icons[icon]}<span>${label}</span></button>`)}
          <ul class="rooms">${ROOMS.map((r) => html`<li>${r}</li>`)}</ul>
        </aside>
        <main class="main">
          <tool-strip .items=${MAIN_TOOLS}></tool-strip>
          <tool-strip .items=${APPT_TOOLS}></tool-strip>
          <div class="work"><appt-schedule></appt-schedule><side-panel></side-panel></div>
          <task-panel></task-panel>
        </main>
      </div>
    </div>`;
  }
}
